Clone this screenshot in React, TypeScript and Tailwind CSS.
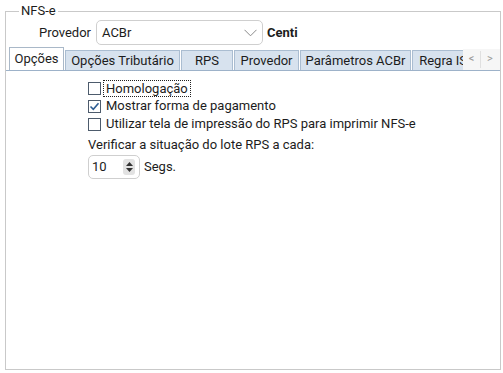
import React from "react";

const tabs = [
  { label: "Opções Tributário", w: 115 },
  { label: "RPS", w: 52 },
  { label: "Provedor", w: 65 },
  { label: "Parâmetros ACBr", w: 111 },
  { label: "Regra ISS", w: 70 },
];

function Check({ checked }: { checked?: boolean }) {
  return (
    <div className="w-[13px] h-[13px] border border-[#4d5b6c] bg-white flex items-center justify-center shrink-0">
      {checked && (
        <svg width="11" height="11" viewBox="0 0 11 11">
          <path d="M1.5 5.5 L4.3 8.3 L9.5 2.2" fill="none" stroke="#2d5d94" strokeWidth="1.6" />
        </svg>
      )}
    </div>
  );
}

export default function App() {
  return (
    <div
      className="w-[503px] h-[373px] bg-white text-[13px] text-[#1c1c1c] pt-[11px] pl-[5px]"
      style={{ fontFamily: "Roboto, 'Liberation Sans', sans-serif" }}
    >
      <div className="relative w-[496px] h-[359px] border border-[#c9c9c9] flex flex-col">
        <div className="absolute -top-[9px] left-[13px] px-[2px] bg-white leading-[16px]">NFS-e</div>

        {/* Provedor row */}
        <div className="flex items-center mt-[8px] h-[25px]">
          <div className="w-[90px] text-right pr-[5px]">Provedor</div>
          <div className="w-[167px] h-[25px] border border-[#cfcfcf] rounded-[5px] flex items-center justify-between pl-[5px] pr-[5px]">
            <span>ACBr</span>
            <svg width="13" height="8" viewBox="0 0 13 8">
              <path d="M0.5 0.8 L6.5 6.8 L12.5 0.8" fill="none" stroke="#8a8a8a" strokeWidth="1" />
            </svg>
          </div>
          <div className="ml-[4px] font-bold">Centi</div>
        </div>

        {/* Tab strip */}
        <div className="flex mt-[2px] h-[24px] border-b border-[#9db2c9] items-end">
          <div className="flex items-end flex-1 overflow-hidden h-[24px] pl-[3px] gap-[1px]">
            <div className="w-[55px] h-[24px] -mb-px bg-white border border-b-0 border-[#a9b8c8] flex items-center justify-center shrink-0 pb-[1px]">
              Opções
            </div>
            {tabs.map((t) => (
              <div
                key={t.label}
                style={{ width: t.w }}
                className="h-[20px] bg-[#d7e2ee] border border-b-0 border-[#aabdd1] flex items-center justify-center shrink-0 whitespace-nowrap"
              >
                {t.label}
              </div>
            ))}
          </div>
          <div className="w-[37px] h-[21px] bg-[#f6f6f6] flex items-center text-[#9a9a9a] text-[11px] shrink-0">
            <span className="w-[18px] text-center border-r border-[#e0e0e0]">&lt;</span>
            <span className="w-[18px] text-center">&gt;</span>
          </div>
        </div>

        {/* Content */}
        <div className="pl-[82px] pt-[8px] flex flex-col">
          <div className="h-[18px] flex items-center">
            <Check />
            <span className="ml-[3px] px-[2px] leading-[15px] outline outline-1 outline-dotted outline-[#222]">
              Homologação
            </span>
          </div>
          <div className="h-[18px] flex items-center">
            <Check checked />
            <span className="ml-[5px]">Mostrar forma de pagamento</span>
          </div>
          <div className="h-[18px] flex items-center">
            <Check />
            <span className="ml-[5px]">Utilizar tela de impressão do RPS para imprimir NFS-e</span>
          </div>
          <div className="h-[18px] mt-[3px] flex items-center">Verificar a situação do lote RPS a cada:</div>
          <div className="flex items-center mt-[1px]">
            <div className="w-[52px] h-[24px] border border-[#cfcfcf] rounded-[5px] flex items-center pl-[3px] pr-[4px] justify-between">
              <span>10</span>
              <div className="w-[12px] h-[16px] bg-[#e2e2e2] rounded-[3px] flex flex-col items-center justify-center gap-[2px]">
                <svg width="7" height="4" viewBox="0 0 7 4">
                  <path d="M0 4 L3.5 0 L7 4 Z" fill="#333" />
                </svg>
                <svg width="7" height="4" viewBox="0 0 7 4">
                  <path d="M0 0 L3.5 4 L7 0 Z" fill="#333" />
                </svg>
              </div>
            </div>
            <span className="ml-[4px]">Segs.</span>
          </div>
        </div>
      </div>
    </div>
  );
}
